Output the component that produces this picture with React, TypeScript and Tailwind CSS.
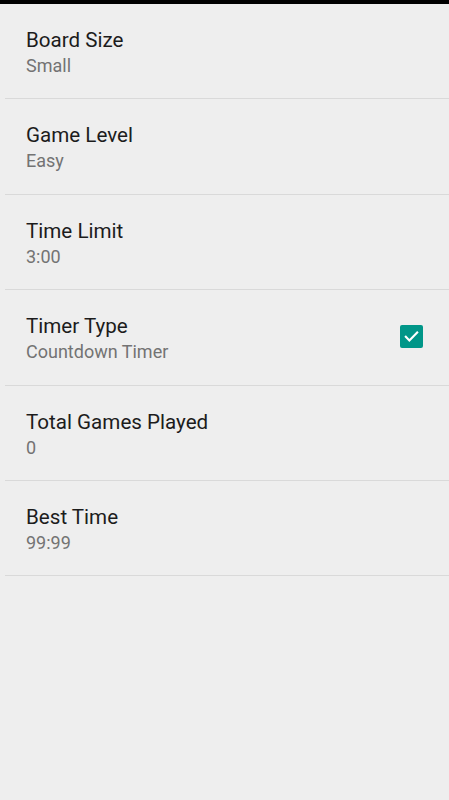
import React from "react";

const rows = [
  { title: "Board Size", sub: "Small" },
  { title: "Game Level", sub: "Easy" },
  { title: "Time Limit", sub: "3:00" },
  { title: "Timer Type", sub: "Countdown Timer", check: true },
  { title: "Total Games Played", sub: "0" },
  { title: "Best Time", sub: "99:99" },
];

export default function App() {
  return (
    <div
      className="w-[449px] h-[800px] bg-[#eeeeee] flex flex-col"
      style={{ fontFamily: "Roboto, 'Noto Sans', sans-serif" }}
    >
      <div className="h-[4px] bg-black shrink-0" />
      <div className="flex flex-col">
        {rows.map((r) => (
          <div key={r.title} className="h-[95.4px] ml-[5px] border-b border-[#d9d9d9] flex items-center justify-between pr-[26px]">
            <div className="self-start pt-[24px] pl-[21px] flex flex-col">
              <div className="text-[20.6px] leading-[24px] text-[#1c1c1c]">{r.title}</div>
              <div className="text-[18px] leading-[20px] mt-[4px] text-[#737373]">{r.sub}</div>
            </div>
            {r.check && (
              <div className="w-[23px] h-[23px] rounded-[2px] bg-[#009688] flex items-center justify-center mt-[-1px]">
                <svg width="17" height="17" viewBox="0 0 24 24" fill="none">
                  <path d="M4 12.5l5 5L20 6.5" stroke="white" strokeWidth="3" strokeLinecap="square" />
                </svg>
              </div>
            )}
          </div>
        ))}
      </div>
    </div>
  );
}
